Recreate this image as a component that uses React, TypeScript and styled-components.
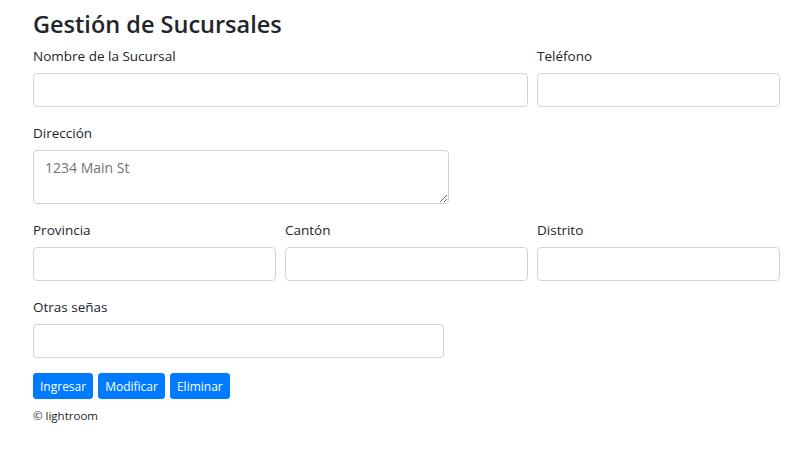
import styled, { createGlobalStyle } from "styled-components";

const GlobalStyle = createGlobalStyle`
  body {
    margin: 0;
    background: #fff;
    color: #212529;
    font-family: "Open Sans", "Noto Sans", sans-serif;
  }
`;

const Page = styled.div`
  padding: 8px 8px 0 33px;
`;

const Title = styled.h3`
  margin: 0 0 5px;
  font-size: 23.5px;
  font-weight: 600;
  line-height: 32px;
`;

const Row = styled.div`
  display: grid;
  grid-template-columns: repeat(3, 1fr);
  column-gap: 9px;
  margin-bottom: 15px;
`;

const Field = styled.div<{ $span?: number; $width?: number }>`
  grid-column: span ${(p) => p.$span || 1};
  display: flex;
  flex-direction: column;
  ${(p) => (p.$width ? `width: ${p.$width}px;` : "")}
`;

const Label = styled.label`
  font-size: 13.5px;
  line-height: 21px;
  margin-top: 1px;
  margin-bottom: 6px;
`;

const Input = styled.input`
  box-sizing: border-box;
  height: 34px;
  width: 100%;
  border: 1px solid #ced4da;
  border-radius: 4px;
  background: #fff;
  padding: 6px 12px;
  font: inherit;
  font-size: 14px;
`;

const TextArea = styled.textarea`
  box-sizing: border-box;
  height: 54px;
  width: 100%;
  border: 1px solid #ced4da;
  border-radius: 4px;
  padding: 6px 11px;
  font: inherit;
  font-size: 14px;
  line-height: 21px;
  color: #495057;
  &::placeholder {
    color: #6c757d;
  }
`;

const Actions = styled.div`
  display: flex;
  gap: 5px;
  margin-top: 15px;
`;

const Button = styled.button`
  height: 26px;
  padding: 0 6px;
  border: 1px solid #007bff;
  border-radius: 3px;
  background: #007bff;
  color: #fff;
  font-family: inherit;
  font-size: 12px;
  cursor: pointer;
`;

const Footer = styled.p`
  margin: 8px 0 0;
  font-size: 11.5px;
  line-height: 18px;
`;

const App = () => {
  return (
    <>
      <GlobalStyle />
      <Page>
        <Title>Gestión de Sucursales</Title>
        <Row>
          <Field $span={2}>
            <Label>Nombre de la Sucursal</Label>
            <Input />
          </Field>
          <Field>
            <Label>Teléfono</Label>
            <Input />
          </Field>
        </Row>
        <Row>
          <Field $span={3} $width={416}>
            <Label>Dirección</Label>
            <TextArea placeholder="1234 Main St" />
          </Field>
        </Row>
        <Row>
          <Field>
            <Label>Provincia</Label>
            <Input />
          </Field>
          <Field>
            <Label>Cantón</Label>
            <Input />
          </Field>
          <Field>
            <Label>Distrito</Label>
            <Input />
          </Field>
        </Row>
        <Row style={{ marginBottom: 0 }}>
          <Field $span={3} $width={411}>
            <Label>Otras señas</Label>
            <Input />
          </Field>
        </Row>
        <Actions>
          <Button>Ingresar</Button>
          <Button>Modificar</Button>
          <Button>Eliminar</Button>
        </Actions>
        <Footer>© lightroom</Footer>
      </Page>
    </>
  );
};

export default App;
